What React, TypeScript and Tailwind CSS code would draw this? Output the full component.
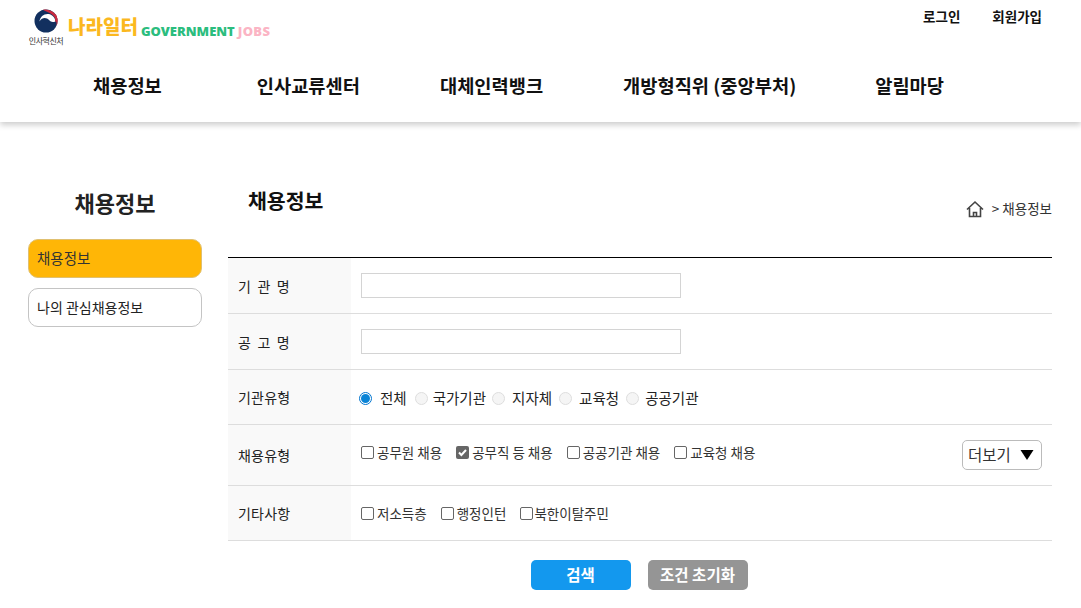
const kr = { fontFamily: '"Noto Sans CJK KR", "Noto Sans", sans-serif' }

function Emblem() {
  return (
    <svg width="24" height="24" viewBox="0 0 24 24" className="block">
      <circle cx="12" cy="12" r="11.500" fill="#12305f" />
      <path d="M9 0.800C15 -0.500 22 3 23.500 10c.4 2.500 0 5-1 7 .6-5-1.500-10-6-12.500C13 2.500 10 1.800 9 0.800z" fill="#c92a3f" />
      <path d="M5.500 12.500C6 7.500 10 4.500 14.500 5c4 .5 7 4 6.800 7.500-2.500 1-4.500 .5-6-1.200-3-3-7-3.200-9.800 1.200z" fill="#fff" />
      <path d="M22 5.500c1 2 1.500 4.500 1 7l-1.800.3c.3-2.700-.2-5.500-1.700-7.800z" fill="#c92a3f" />
    </svg>
  )
}

function Radio({ label, checked, gap, className }: { label: string; checked?: boolean; gap: string; className?: string }) {
  return (
    <label className={'flex items-center ' + (className ?? '')}>
      {checked ? (
        <span className="flex h-[13px] w-[13px] items-center justify-center rounded-full border border-[#0075d0] bg-white">
          <span className="h-[9px] w-[9px] rounded-full bg-[#0a84d6]" />
        </span>
      ) : (
        <span className="h-[13px] w-[13px] rounded-full border border-[#dedede] bg-[#f5f5f5]" />
      )}
      <span className={'text-[14.5px] text-[#222] ' + gap}>{label}</span>
    </label>
  )
}

function Check({ label, checked, className, gap }: { label: string; checked?: boolean; className?: string; gap?: string }) {
  return (
    <label className={'flex items-center ' + (className ?? '')}>
      {checked ? (
        <span className="flex h-[13px] w-[13px] items-center justify-center rounded-[2px] bg-[#666]">
          <svg width="11" height="11" viewBox="0 0 11 11">
            <path d="M2 5.500l2.400 2.500L9 3" fill="none" stroke="#fff" strokeWidth="2" />
          </svg>
        </span>
      ) : (
        <span className="h-[13px] w-[13px] rounded-[2px] border border-[#666] bg-white" />
      )}
      <span className={'text-[13.5px] text-[#333] ' + (gap ?? 'ml-[3px]')}>{label}</span>
    </label>
  )
}

function Row({ label, h, children }: { label: string; h: string; children: React.ReactNode }) {
  return (
    <div className={'flex border-b border-[#ddd] ' + h}>
      <div className="flex w-[123px] items-center bg-[#f9f9f9] pl-[10px] pt-[1px] text-[14px] tracking-[0.2px] text-[#222] [word-spacing:3px]">{label}</div>
      <div className="flex flex-1 items-center pl-[10px]">{children}</div>
    </div>
  )
}

export default function App() {
  return (
    <div className="h-[608px] w-[1081px] overflow-hidden bg-white" style={kr}>
      <header className="h-[122px] bg-white shadow-[0_3px_6px_rgba(0,0,0,0.2)]">
        <div className="flex h-[71px] justify-between">
          <div className="flex items-start pl-[28px] pt-[9px]">
            <div className="flex w-[36px] flex-col items-center">
              <Emblem />
              <span className="mt-[3px] whitespace-nowrap text-[8px] leading-[10px] tracking-[-0.5px] text-[#333]">인사혁신처</span>
            </div>
            <span className="ml-[4px] mt-[4px] text-[19px] font-black leading-[26px] text-[#fbb81f]">나라일터</span>
            <span className="ml-[3px] mt-[13px] text-[13px] font-black leading-[18px] text-[#2bbd7e]" style={{ fontFamily: '"Noto Sans", sans-serif' }}>GOVERNMENT</span>
            <span className="ml-[3px] mt-[13px] text-[13px] font-black leading-[18px] tracking-[0.3px] text-[#fbb4c4]" style={{ fontFamily: '"Noto Sans", sans-serif' }}>JOBS</span>
          </div>
          <div className="flex gap-[32px] pr-[39px] pt-[7px] text-[13.5px] font-bold leading-[18px] text-[#111]">
            <span>로그인</span>
            <span>회원가입</span>
          </div>
        </div>
        <nav className="flex pl-[93px] text-[18.7px] font-bold leading-[28px] text-[#111]">
          <span className="mr-[95px]">채용정보</span>
          <span className="mr-[80px]">인사교류센터</span>
          <span className="mr-[80px]">대체인력뱅크</span>
          <span className="mr-[79px]">개방형직위 (중앙부처)</span>
          <span>알림마당</span>
        </nav>
      </header>

      <div className="flex pl-[28px] pr-[29px]">
        <aside className="w-[174px] pt-[64px]">
          <h2 className="text-center text-[22px] font-bold leading-[32px] text-[#222]">채용정보</h2>
          <div className="mt-[21px] flex h-[39px] items-center rounded-[10px] border border-[#e0c070] bg-[#ffb606] pb-[2px] pl-[8px] text-[14.5px] text-[#333]">채용정보</div>
          <div className="mt-[10px] flex h-[39px] items-center rounded-[10px] border border-[#c4c4c4] bg-white pl-[8px] text-[14px] text-[#222]">나의 관심채용정보</div>
        </aside>

        <main className="ml-[26px] flex-1 pt-[67px]">
          <div className="flex h-[69px] items-start justify-between border-b border-black">
            <h1 className="-mt-[2px] pl-[20px] text-[20.5px] font-bold leading-[26px] text-[#111]">채용정보</h1>
            <div className="mt-[8px] flex items-center text-[13.500px] leading-[18px] text-[#333]">
              <svg width="18" height="18" viewBox="0 0 18 18" className="mr-[8px] mt-[3px]">
                <path d="M1 9.500L9 2l8 7.500M3.500 8v8.500h11V8M7.500 16.500v-4h3v4" fill="none" stroke="#444" strokeWidth="1.600" />
              </svg>
              <span>&gt; 채용정보</span>
            </div>
          </div>

          <Row label="기 관 명" h="h-[56px]">
            <input className="h-[25px] w-[320px] border border-[#d4d4d4] bg-white" />
          </Row>
          <Row label="공 고 명" h="h-[56px]">
            <input className="h-[25px] w-[320px] border border-[#d4d4d4] bg-white" />
          </Row>
          <Row label="기관유형" h="h-[55px]">
            <div className="-ml-[2px] flex pt-[2px]">
              <Radio label="전체" checked gap="ml-[8px]" />
              <Radio label="국가기관" gap="ml-[5px]" className="ml-[8px]" />
              <Radio label="지자체" gap="ml-[7px]" className="ml-[6px]" />
              <Radio label="교육청" gap="ml-[7px]" className="ml-[7px]" />
              <Radio label="공공기관" gap="ml-[6px]" className="ml-[7px]" />
            </div>
          </Row>
          <Row label="채용유형" h="h-[61px]">
            <div className="flex w-full items-center justify-between pr-[10px]">
              <div className="-mt-[6px] flex">
                <Check label="공무원 채용" />
                <Check label="공무직 등 채용" checked className="ml-[14px]" />
                <Check label="공공기관 채용" className="ml-[14px]" />
                <Check label="교육청 채용" className="ml-[14px]" />
              </div>
              <button type="button" className="flex h-[30px] w-[80px] items-center rounded-[5px] border border-[#bbb] bg-white pl-[5px] text-[15.5px] text-[#333]">
                더보기
                <svg width="14" height="12" viewBox="0 0 14 12" className="ml-[9px]">
                  <path d="M0.500 1h13L7 11z" fill="#000" />
                </svg>
              </button>
            </div>
          </Row>
          <Row label="기타사항" h="h-[55px]">
            <div className="flex pt-[1px]">
              <Check label="저소득층" />
              <Check label="행정인턴" className="ml-[14px]" />
              <Check label="북한이탈주민" className="ml-[14px]" gap="ml-[1px]" />
            </div>
          </Row>

          <div className="mt-[19px] flex justify-center gap-[17px] pr-[2px]">
            <button type="button" className="h-[30px] w-[100px] rounded-[5px] bg-[#1398ee] text-[15.5px] font-bold text-white">검색</button>
            <button type="button" className="h-[30px] w-[100px] rounded-[5px] bg-[#959595] text-[15.5px] font-bold text-white">조건 초기화</button>
          </div>
        </main>
      </div>
    </div>
  )
}
